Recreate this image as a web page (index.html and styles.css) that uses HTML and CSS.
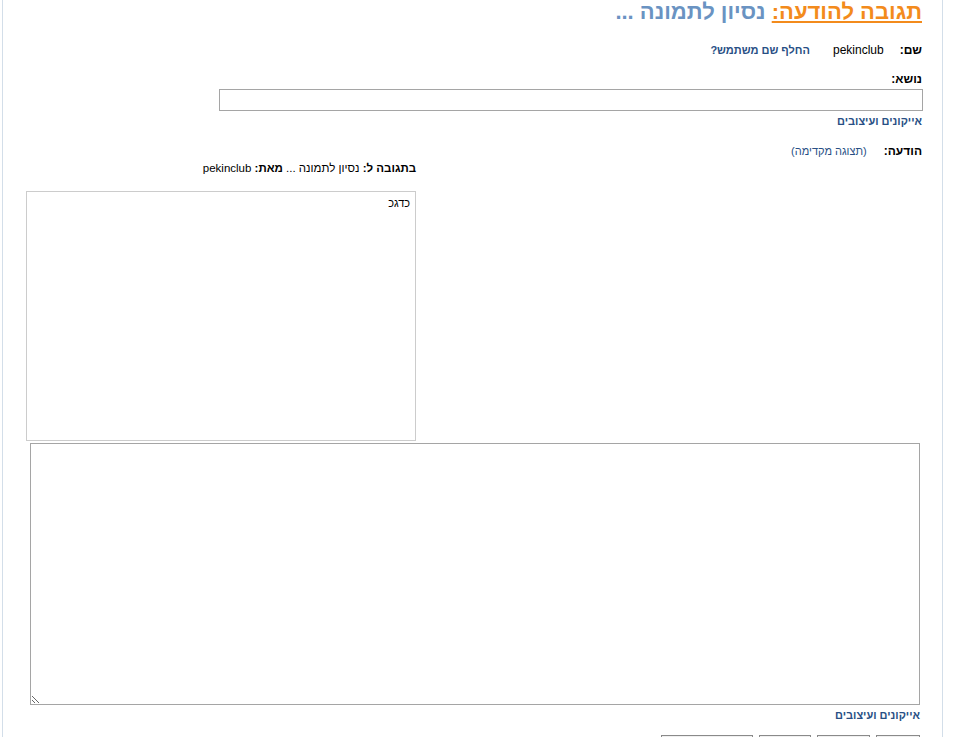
FILE: index.html
```html
<!DOCTYPE html>
<html lang="he" dir="rtl">
<head>
<meta charset="utf-8">
<title>תגובה להודעה</title>
<link rel="stylesheet" href="styles.css">
</head>
<body>
<div class="page">
  <h1 class="title"><a href="#" class="title-main">תגובה להודעה:</a> <span class="title-sub">נסיון לתמונה ...</span></h1>

  <div class="row name-row">
    <span class="label">שם:</span>
    <span class="value">pekinclub</span>
    <a href="#" class="link">החלף שם משתמש?</a>
  </div>

  <div class="label subject-label">נושא:</div>
  <input type="text" class="subject">
  <div class="icons"><a href="#" class="link">אייקונים ועיצובים</a></div>

  <div class="row msg-row">
    <span class="label">הודעה:</span>
    <a href="#" class="link-plain">(תצוגה מקדימה)</a>
  </div>

  <div class="quote">
    <div class="quote-head"><b>בתגובה ל:</b> נסיון לתמונה ... <b>מאת:</b> pekinclub</div>
    <div class="quote-box">כדגכ</div>
  </div>

  <textarea class="message"></textarea>
  <div class="icons icons-bottom"><a href="#" class="link">אייקונים ועיצובים</a></div>

  <div class="buttons">
    <button class="btn b1" aria-label="שלח"></button>
    <button class="btn b2" aria-label="תצוגה"></button>
    <button class="btn b3" aria-label="בדיקה"></button>
    <button class="btn b4" aria-label="ביטול"></button>
  </div>
</div>
</body>
</html>
```
FILE: styles.css
```css
html, body {
  margin: 0;
  padding: 0;
  background: #ffffff;
}
body {
  font-family: "Liberation Sans", Arial, sans-serif;
  font-size: 12px;
  color: #000;
  direction: rtl;
}
.page {
  margin: 0 12px 0 2px;
  border-left: 1px solid #d3dee9;
  border-right: 1px solid #d3dee9;
  padding-right: 20px;
  min-height: 760px;
}
.title {
  margin: 0;
  font-size: 22px;
  line-height: 24px;
  font-weight: bold;
}
.title-main {
  color: #f38b1c;
  text-decoration: underline;
}
.title-sub {
  color: #6a93c2;
}
.row {
  display: flex;
  align-items: center;
  line-height: 14px;
}
.label {
  font-weight: bold;
  line-height: 14px;
}
.name-row {
  margin-top: 19px;
}
.name-row .value {
  margin-right: 16px;
}
.name-row .link {
  margin-right: 23px;
}
.link {
  color: #284f85;
  font-weight: bold;
  text-decoration: none;
  font-size: 11px;
}
.link-plain {
  color: #284f85;
  text-decoration: none;
  font-size: 11px;
}
.subject-label {
  margin-top: 15px;
}
.subject {
  display: block;
  margin: 3px -1px 0 0;
  width: 704px;
  height: 22px;
  box-sizing: border-box;
  border: 1px solid #a5a5a5;
  padding: 0 3px;
  font-family: inherit;
}
.icons {
  margin-top: 3px;
  line-height: 14px;
}
.msg-row {
  margin-top: 16px;
}
.msg-row .link-plain {
  margin-right: 17px;
}
.quote {
  width: 390px;
  margin-right: 506px;
  margin-top: 3px;
}
.quote-head {
  line-height: 14px;
  font-size: 11.5px;
}
.quote-box {
  margin-top: 16px;
  height: 250px;
  box-sizing: border-box;
  border: 1px solid #cccccc;
  padding: 5px;
  font-size: 11px;
}
.message {
  display: block;
  margin: 2px 2px 0 0;
  width: 890px;
  height: 262px;
  box-sizing: border-box;
  border: 1px solid #a5a5a5;
  direction: rtl;
  font-family: inherit;
}
.icons-bottom {
  margin-right: 2px;
}
.buttons {
  display: flex;
  gap: 6px;
  margin-top: 13px;
  margin-right: 2px;
}
.btn {
  height: 22px;
  border: 1px solid #8a8a8a;
  background: #f0f0f0;
  padding: 0;
}
.b1 { width: 44px; }
.b2 { width: 53px; }
.b3 { width: 52px; }
.b4 { width: 92px; }
```
